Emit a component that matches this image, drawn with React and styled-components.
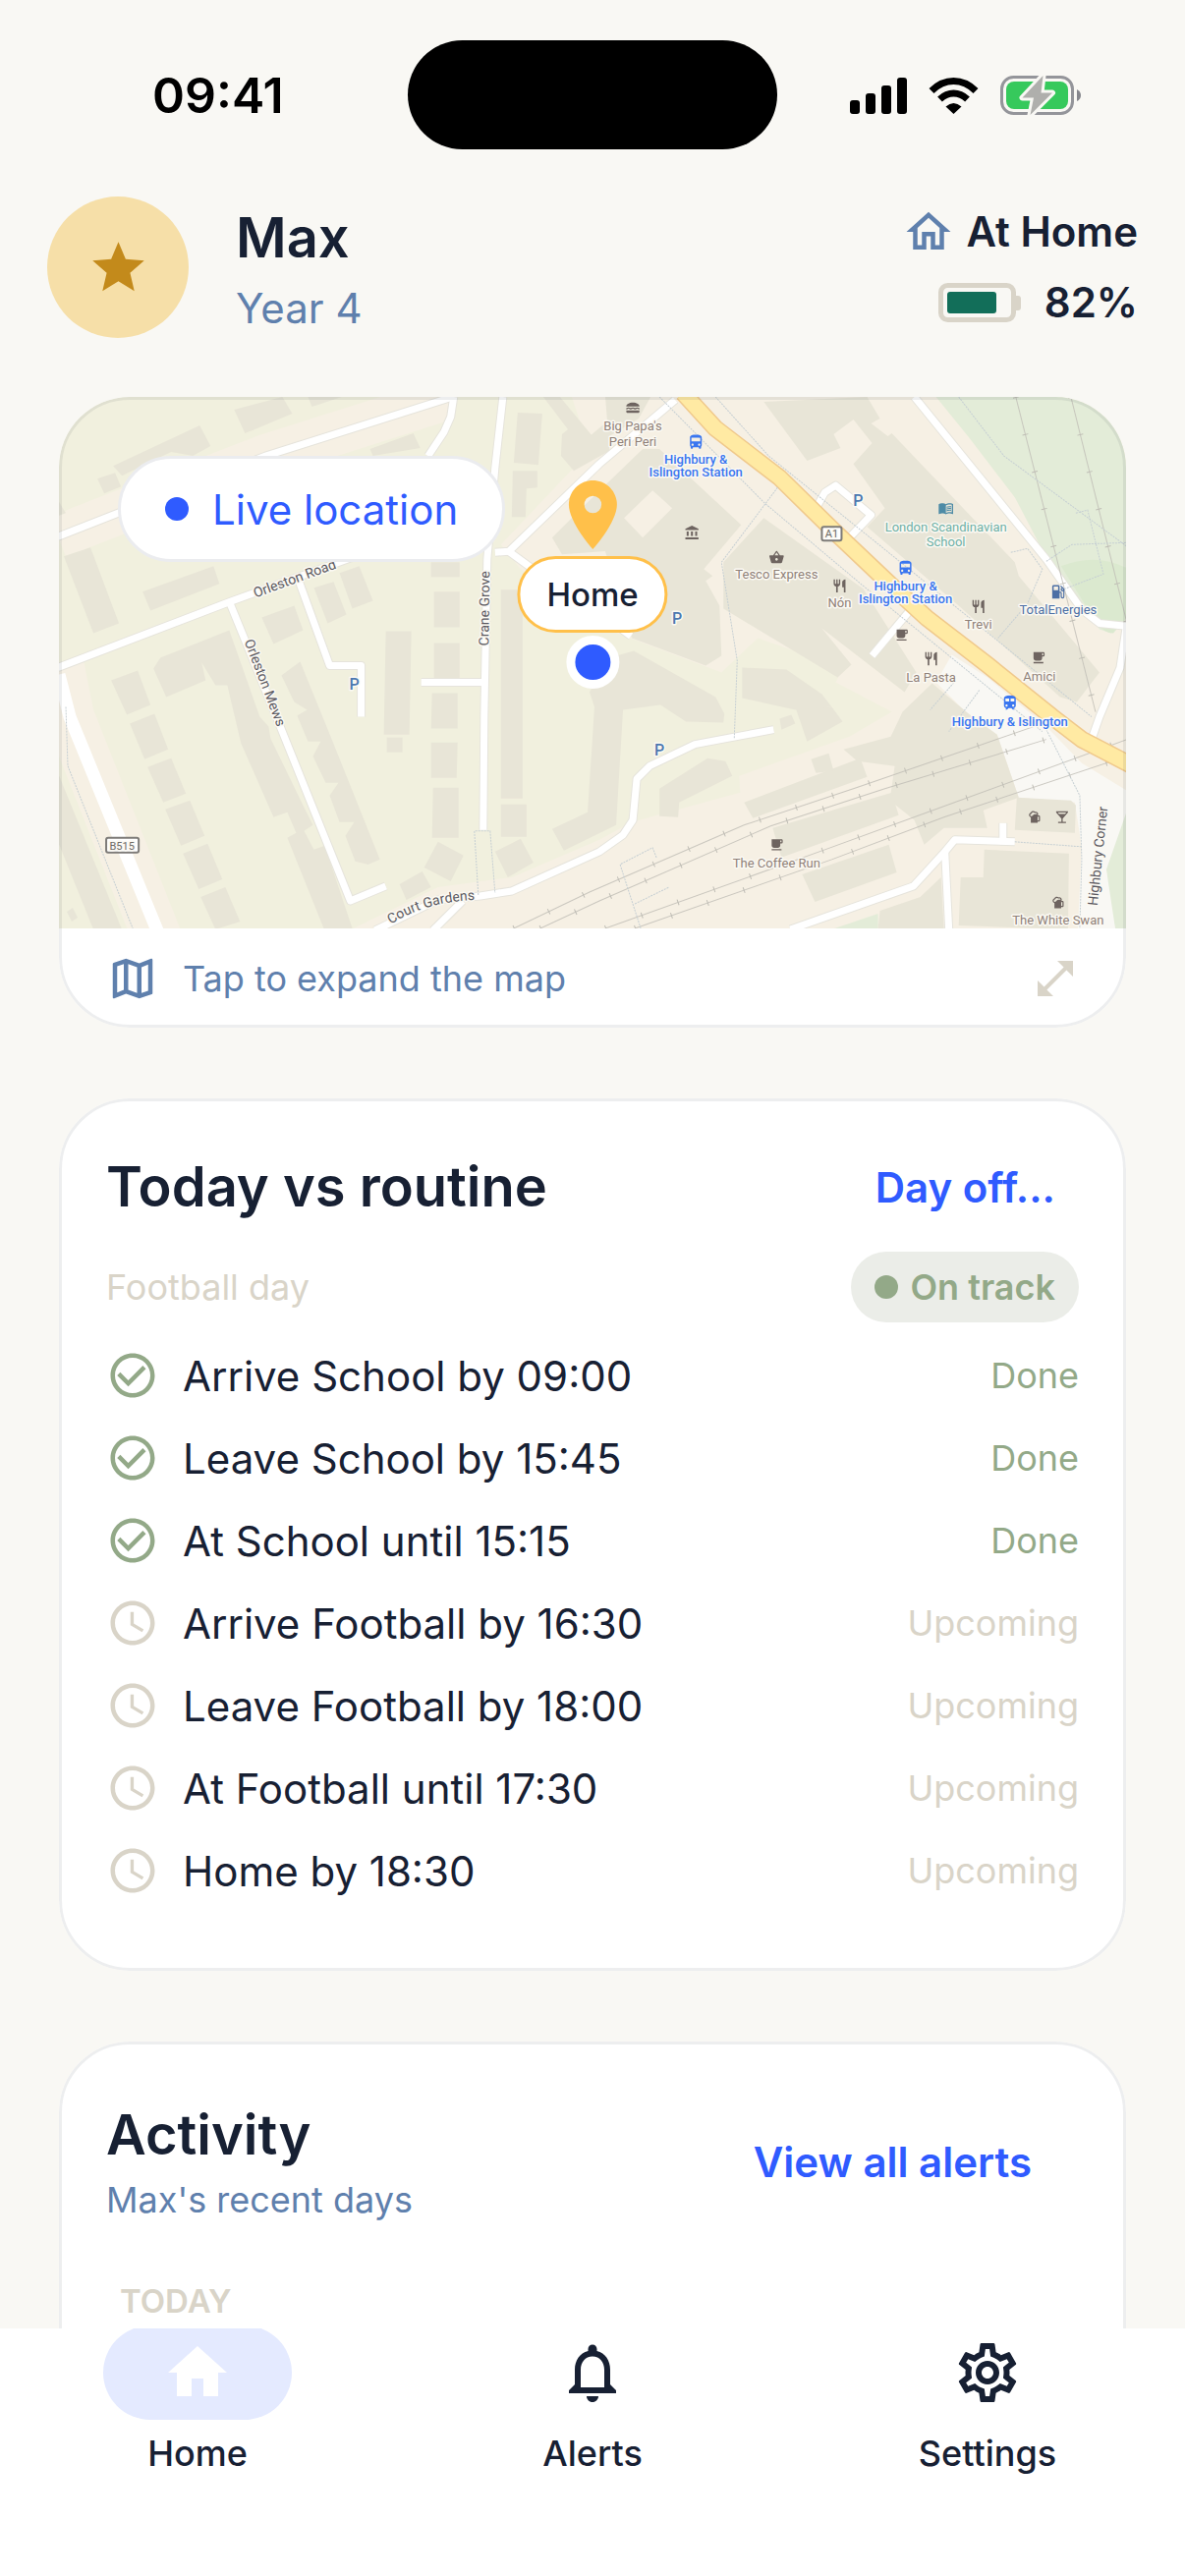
import React from 'react';
import styled, { createGlobalStyle } from 'styled-components';
import {
  MdAccountBalance,
  MdCheckCircleOutline,
  MdDirectionsBus,
  MdHome,
  MdLocalBar,
  MdLocalCafe,
  MdLocalGasStation,
  MdLocationOn,
  MdLunchDining,
  MdMenuBook,
  MdNotificationsNone,
  MdOpenInFull,
  MdOutlineHome,
  MdOutlineMap,
  MdOutlineSettings,
  MdRestaurant,
  MdSchedule,
  MdShoppingBasket,
  MdSportsBar,
  MdStar,
  MdTrain
} from 'react-icons/md';

const ink = '#172033';
const slate = '#5f80ad';
const sand = '#d9d4c8';
const sage = '#93a988';
const blue = '#2f5bff';
const amber = '#ffc04a';

const GlobalStyle = createGlobalStyle`
  * {
    box-sizing: border-box;
  }

  body {
    margin: 0;
    background: #f9f8f4;
    color: ${ink};
    font-family: Inter, Roboto, sans-serif;
  }

  h1, h2, p, ul {
    margin: 0;
    padding: 0;
  }

  button {
    border: 0;
    padding: 0;
    background: none;
    color: inherit;
    font: inherit;
    cursor: pointer;
  }

  svg {
    display: block;
    flex: none;
  }
`;

const Screen = styled.div`
  display: flex;
  flex-direction: column;
  height: 100vh;
`;

const StatusBar = styled.div`
  display: grid;
  grid-template-columns: 1fr auto 1fr;
  align-items: center;
  flex: none;
  padding-top: 41px;
`;

const Clock = styled.span`
  padding-left: 155px;
  color: #000;
  font-size: 50px;
  font-weight: 600;
`;

const Island = styled.div`
  width: 376px;
  height: 111px;
  border-radius: 56px;
  background: #000;
`;

const StatusIcons = styled.div`
  display: flex;
  align-items: center;
  justify-content: flex-end;
  gap: 22px;
  padding-right: 106px;
`;

const Header = styled.header`
  display: flex;
  align-items: center;
  flex: none;
  gap: 48px;
  padding: 48px 48px 60px;
`;

const Avatar = styled.div`
  display: flex;
  align-items: center;
  justify-content: center;
  width: 144px;
  height: 144px;
  border-radius: 50%;
  background: #f6dfa8;
  color: #c38a1b;
`;

const Name = styled.h1`
  font-size: 56px;
  font-weight: 600;
  line-height: 84px;
`;

const Year = styled.p`
  color: ${slate};
  font-size: 42px;
  line-height: 60px;
`;

const Presence = styled.div`
  display: flex;
  flex-direction: column;
  align-items: flex-end;
  gap: 18px;
  margin-left: auto;
`;

const PresenceLine = styled.div`
  display: flex;
  align-items: center;
  gap: ${({ $gap }) => $gap}px;
  font-size: 42px;
  font-weight: 600;
  line-height: 54px;

  svg {
    color: ${slate};
  }
`;

const Feed = styled.main`
  display: flex;
  flex-direction: column;
  flex: 1;
  min-height: 0;
  gap: 72px;
  padding: 0 60px;
  overflow: hidden;
`;

const Card = styled.section`
  position: relative;
  flex: none;
  border-radius: 72px;
  background: #fff;
  overflow: hidden;

  &::after {
    content: '';
    position: absolute;
    inset: 0;
    border: 3px solid rgba(23, 32, 51, 0.08);
    border-radius: inherit;
    pointer-events: none;
  }
`;

const PaddedCard = styled(Card)`
  padding: 48px 48px 60px;

  &:last-child {
    padding-bottom: 144px;
  }
`;

const MapArea = styled.div`
  position: relative;
  height: 541px;

  > svg {
    width: 100%;
    height: 100%;
  }
`;

const LiveChip = styled.div`
  position: absolute;
  top: 60px;
  left: 60px;
  display: flex;
  align-items: center;
  gap: 24px;
  height: 108px;
  padding: 0 45px;
  border: 3px solid #ebecef;
  border-radius: 54px;
  background: #fff;
  color: ${blue};
  font-size: 42px;
`;

const Dot = styled.span`
  width: 24px;
  height: 24px;
  border-radius: 50%;
  background: currentColor;
`;

const Marker = styled.div`
  position: absolute;
  top: 78px;
  left: 50%;
  display: flex;
  flex-direction: column;
  align-items: center;
  transform: translateX(-50%);

  svg {
    color: ${amber};
  }
`;

const MarkerLabel = styled.span`
  height: 78px;
  margin-bottom: 3px;
  padding: 0 27px;
  border: 3px solid ${amber};
  border-radius: 39px;
  background: #fff;
  font-size: 33px;
  font-weight: 500;
  line-height: 72px;
`;

const MarkerDot = styled.span`
  width: 54px;
  height: 54px;
  border: 9px solid #fff;
  border-radius: 50%;
  background: ${blue};
`;

const ExpandButton = styled.button`
  display: flex;
  align-items: center;
  gap: 24px;
  width: 100%;
  height: 101px;
  padding: 0 48px;
  color: ${slate};
  font-size: 36px;

  svg:last-child {
    margin-left: auto;
    color: ${sand};
  }
`;

const CardHead = styled.div`
  display: flex;
  align-items: center;
  justify-content: space-between;
  min-height: ${({ $height }) => $height}px;
`;

const Title = styled.h2`
  font-size: 56px;
  font-weight: 600;
  line-height: 78px;
`;

const Subtitle = styled.p`
  color: ${slate};
  font-size: 36px;
  line-height: 54px;
`;

const TextButton = styled.button`
  align-self: stretch;
  padding: 0 ${({ $inset }) => $inset}px;
  color: ${blue};
  font-size: 42px;
  font-weight: 600;
`;

const DayRow = styled.div`
  display: flex;
  align-items: center;
  justify-content: space-between;
  margin: 24px 0 12px;
  color: ${sand};
  font-size: 36px;
`;

const TrackBadge = styled.span`
  display: flex;
  align-items: center;
  gap: 12px;
  height: 72px;
  padding: 0 24px;
  border-radius: 36px;
  background: #ebede8;
  color: ${sage};
  font-weight: 600;
`;

const Step = styled.li`
  display: flex;
  align-items: center;
  gap: 24px;
  height: 84px;
  font-size: 42px;

  svg {
    color: ${({ $done }) => ($done ? sage : sand)};
  }
`;

const StepState = styled.span`
  margin-left: auto;
  color: ${({ $done }) => ($done ? sage : sand)};
  font-size: 36px;
`;

const DayLabel = styled.p`
  margin: 44px 0 0 14px;
  color: ${sand};
  font-size: 33px;
  font-weight: 600;
  line-height: 48px;
`;

const TabBar = styled.nav`
  display: grid;
  grid-template-columns: repeat(3, 1fr);
  flex: none;
  padding-bottom: 101px;
  background: #fff;
  overflow: hidden;
`;

const Tab = styled.button`
  display: flex;
  flex-direction: column;
  align-items: center;
  gap: 10px;
  margin-top: -3px;
  font-size: 36px;
  font-weight: 500;
  line-height: 48px;
`;

const TabIcon = styled.span`
  display: flex;
  align-items: center;
  justify-content: center;
  width: 192px;
  height: 96px;
  border-radius: 48px;
  background: ${({ $active }) => ($active ? '#e4eaff' : 'transparent')};
  color: ${({ $active }) => ($active ? '#fff' : ink)};
`;

const steps = [
  { text: 'Arrive School by 09:00', done: true },
  { text: 'Leave School by 15:45', done: true },
  { text: 'At School until 15:15', done: true },
  { text: 'Arrive Football by 16:30', done: false },
  { text: 'Leave Football by 18:00', done: false },
  { text: 'At Football until 17:30', done: false },
  { text: 'Home by 18:30', done: false }
];

const tabs = [
  { label: 'Home', Icon: MdHome, active: true },
  { label: 'Alerts', Icon: MdNotificationsNone },
  { label: 'Settings', Icon: MdOutlineSettings }
];

const buildings = [
  '56,70 144,29 155,50 137,60 115,56 65,80',
  '40,83 58,77 64,91 47,98',
  '0,105 8,118 0,121',
  '179,13 228,0 238,17 190,37',
  '254,0 288,0 258,10',
  '317,53 361,37 368,52 320,60',
  '467,16 492,17 488,69 463,67',
  '462,75 487,75 487,92 476,93 475,122 461,122',
  '493,0 510,0 543,40 560,32 560,55 524,75 511,60 512,38 518,33',
  '502,143 540,105 560,110 580,155 512,160',
  '6,162 33,153 62,230 36,240',
  '86,198 158,172 164,190 94,217',
  '260,194 280,188 293,221 274,230',
  '286,179 306,172 320,207 299,215',
  '207,224 240,212 249,237 219,251',
  '379,168 408,168 408,183 379,183',
  '382,198 408,198 408,234 382,234',
  '382,250 408,250 408,287 382,287',
  '380,301 406,301 406,337 379,337',
  '333,238 359,238 357,343 331,343',
  '334,346 350,346 350,361 334,361',
  '379,351 406,351 405,387 379,387',
  '381,397 407,397 407,448 380,448',
  '450,196 472,196 472,408 450,408',
  '450,414 476,414 476,447 450,447',
  '386,452 412,466 399,492 372,478',
  '444,462 470,449 483,473 457,488',
  '347,495 370,482 379,498 354,511',
  '502,439 538,422 545,315 540,300 560,265 585,258 668,305 677,322 676,331 638,330 612,313 574,318 567,435 514,461',
  '104,265 174,237 205,325 214,335 216,347 249,415 259,435 250,441 260,460 271,456 299,540 270,540 233,448 242,443 233,422 219,427 186,352 172,293 160,293 146,270 150,288 110,305 97,276',
  '227,283 246,269 275,340 327,470 315,475 302,472 292,446 301,432 286,432 276,405 285,392 272,392 259,365 267,350 254,350 243,324 253,318 240,310',
  '54,288 81,278 94,313 70,323',
  '73,332 98,322 112,358 88,368',
  '91,376 115,367 130,403 107,412',
  '109,419 134,410 149,446 125,456',
  '127,464 152,454 167,490 143,500',
  '145,508 170,498 185,533 160,541',
  '0,382 65,541 36,541 0,452',
  '9,523 15,519 20,529 14,533',
  '540,40 558,25 556,0 602,0 590,22 560,40',
  '540,105 594,53 611,53 694,130 656,175 665,182 658,187 672,212 674,263 658,273 583,245 560,170',
  '676,168 717,123 818,195 872,280 860,300 776,235 806,272 792,285 676,215',
  '717,5 822,0 835,22 826,27 843,40 847,37 972,168 976,182 1058,280 1035,310 1018,305 915,212 822,132 840,113 808,68 827,47 808,23 788,38 795,52 761,65',
  '888,291 925,322 954,343 976,407 940,420 944,438 900,438 880,455 870,430 845,410 850,375 812,370 798,358 846,345 858,320',
  '697,412 815,367 822,386 706,428',
  '726,438 847,402 854,425 735,468',
  '756,485 844,455 852,483 769,513',
  '765,368 783,362 788,380 770,382',
  '611,398 660,367 678,370 685,385 631,412 630,427 611,426',
  '749,315 786,315 797,330 761,350',
  '695,275 740,277 776,302 786,315 749,318 695,306',
  '733,327 745,323 749,332 735,338',
  '833,541 835,522 876,508 897,488 900,541',
  '915,537 917,488 940,488 941,460 1027,464 1026,541',
  '974,407 1029,410 1034,415 1033,443 972,440'
];

const verges = ['0,142 61,118 211,60 397,1', '1,270 12,325 105,560'];

const streets = [
  '0,142 61,118 211,60 401,0',
  '402,0 399,20 392,36 376,60',
  '452,0 444,72 436,165 433,325 432,440',
  '444,158 458,157 550,68 627,3',
  '458,157 480,173 530,205 582,243',
  '0,275 175,208 280,170 444,110',
  '174,208 219,318 297,512 333,497',
  '244,185 276,273 308,273 308,325',
  '369,290 433,290',
  '322,542 386,511 429,507 461,502 550,462 574,445 584,430 588,388 601,375 647,353 727,338',
  '411,512 381,542',
  '870,0 1004,165 1040,216 1058,230 1086,233',
  '1085,235 1079,275 1058,325 1051,345',
  '769,115 779,97 790,90 826,120 804,143',
  '867,215 827,263',
  '744,541 869,497 901,462 911,450 972,452',
  '960,433 960,450',
  '901,462 905,541'
];

const rails = [
  '463,540 540,503 697,435 811,397 933,355 1020,325',
  '490,540 550,512 724,436 840,398 1004,348',
  '556,540 779,460 897,417 1086,348',
  '586,540 786,470 900,427 1086,365',
  '973,0 1054,320',
  '1029,0 1086,230'
];

const paths = [
  '668,0 722,60 840,155 1050,325',
  '611,0 718,108 818,192 1000,340',
  '731,92 674,168 690,268 687,347',
  '8,315 10,375 76,540',
  '427,506 423,441 439,441 444,504',
  '608,468 604,458 571,475 592,540',
  '586,515 621,498',
  '915,0 961,60 1086,152',
  '972,452 1040,457',
  '1004,338 1038,405 1040,470 1038,540',
  '968,158 985,154 1000,175 985,210 955,245',
  '1004,167 1030,150 1086,148',
  '1034,118 1046,115 1062,180 1020,196',
  '912,288 886,318',
  '936,298 905,340'
];

const restaurants = [[794, 192], [935, 213], [887, 266]];
const cafes = [[857, 242], [996, 265], [730, 455]];
const bars = [[992, 427], [1016, 514]];
const parkings = [[813, 111], [629, 231], [301, 297], [611, 364]];

const venues = [
  { x: 584, y: 34, lines: ["Big Papa's", 'Peri Peri'], step: 16 },
  { x: 730, y: 185, lines: ['Tesco Express'] },
  { x: 794, y: 214, lines: ['Nón'] },
  { x: 935, y: 236, lines: ['Trevi'] },
  { x: 887, y: 289, lines: ['La Pasta'] },
  { x: 997, y: 288, lines: ['Amici'] },
  { x: 730, y: 478, lines: ['The Coffee Run'] },
  { x: 1016, y: 536, lines: ['The White Swan'] },
  { x: 902, y: 137, lines: ['London Scandinavian', 'School'], step: 15, color: '#6db0a6' },
  { x: 1016, y: 221, lines: ['TotalEnergies'], color: '#4c6fa5' },
  { x: 648, y: 68, lines: ['Highbury &', 'Islington Station'], step: 13, color: '#3a76f0', bold: true },
  { x: 861, y: 197, lines: ['Highbury &', 'Islington Station'], step: 13, color: '#3a76f0', bold: true },
  { x: 967, y: 334, lines: ['Highbury & Islington'], color: '#3a76f0', bold: true }
];

const MapText = styled.text`
  fill: ${({ $color }) => $color || '#8f8078'};
  stroke: #fbf9f3;
  stroke-width: 3px;
  stroke-linejoin: round;
  paint-order: stroke;
  font-family: Roboto, sans-serif;
  font-size: ${({ $size }) => $size || 13}px;
  font-weight: ${({ $bold }) => ($bold ? 500 : 400)};
  text-anchor: middle;
`;

const Poi = ({ icon: Icon, x, y, color = '#6e6460', size = 16 }) => (
  <Icon x={x - size / 2} y={y - size / 2} size={size} color={color} />
);

const StreetMap = () => (
  <svg viewBox="0 0 1086 540" preserveAspectRatio="xMidYMid slice" role="img" aria-label="Street map">
    <rect width="1086" height="540" fill="#f1f0de" />
    <g fill="none" stroke="#f6f0e4">
      <polyline points={verges[0]} strokeWidth="44" />
      <polyline points={verges[1]} strokeWidth="50" />
    </g>
    <polygon
      fill="#f6f0e4"
      points="522,0 1086,0 1086,540 300,540 386,498 461,488 550,450 583,432 693,402 692,385 804,345 847,320 790,290 797,275 711,245 674,280 568,240 470,175 450,150 540,55"
    />
    <g fill="#e3ecd8">
      <polygon points="892,0 1086,0 1086,225 1070,240 1058,236 1040,212 1019,192 972,102 926,42" />
      <polygon points="1086,420 1070,450 1065,480 1067,510 1074,540 1086,540" />
      <polygon points="786,541 833,525 833,541" />
    </g>
    <path d="M1019 172q35-14 67 2v50l-14 16q-10 0-18-12z" fill="#dbe9cf" />
    <polygon
      fill="#f9f8f4"
      points="908,262 892,290 920,318 954,343 976,407 1033,412 1040,458 1036,540 1074,540 1065,480 1086,420 1086,400 1040,372 1004,335 944,285"
    />
    <g fill="#e8e5d7">
      {buildings.map(points => <polygon key={points} points={points} />)}
    </g>
    <polygon points="575,123 604,95 624,113 594,143" fill="#f6f0e4" />
    <g fill="none" stroke="#e6e4dc" strokeWidth="9" strokeLinejoin="round">
      {streets.map(points => <polyline key={points} points={points} />)}
    </g>
    <g fill="none" stroke="#fff" strokeWidth="7" strokeLinejoin="round">
      {streets.map(points => <polyline key={points} points={points} />)}
      <polyline points="1,282 12,325 102,545" strokeWidth="13" />
    </g>
    <g fill="none" stroke="#bfbdb5">
      {rails.map(points => (
        <g key={points}>
          <polyline points={points} opacity="0.8" />
          <polyline points={points} strokeWidth="6" strokeDasharray="1 38" />
        </g>
      ))}
    </g>
    <g fill="none" strokeLinejoin="round">
      <polyline
        points="635,-4 668,32 733,82 790,138 847,192 883,225 944,272 1010,325 1040,348 1090,374"
        stroke="#f0c98c"
        strokeWidth="18"
      />
      <polyline
        points="635,-4 668,32 733,82 790,138 847,192 883,225 944,272 1010,325 1040,348 1090,374"
        stroke="#ffeaa3"
        strokeWidth="15"
      />
    </g>
    <g fill="none" stroke="#c6cfd3" strokeDasharray="2 1">
      {paths.map(points => <polyline key={points} points={points} />)}
    </g>

    <g fill="#fff" stroke="#7d7b78" strokeWidth="2">
      <rect x="49" y="448" width="33" height="15" rx="2" />
      <rect x="776" y="132" width="20" height="14" rx="2" />
    </g>
    <MapText x="65" y="460" $size={11} $color="#6d6b68">B515</MapText>
    <MapText x="786" y="143" $size={11} $color="#6d6b68">A1</MapText>

    <MapText $size={14} $color="#5a5860" transform="translate(242 189) rotate(-20)">Orleston Road</MapText>
    <MapText $size={14} $color="#5a5860" transform="translate(206 292) rotate(69)">Orleston Mews</MapText>
    <MapText $size={14} $color="#5a5860" transform="translate(438 215) rotate(-89)">Crane Grove</MapText>
    <MapText $size={14} $color="#5a5860" transform="translate(1061 467) rotate(-84)">Highbury Corner</MapText>
    <path id="court-gardens" d="M338 536Q372 513 424 511" fill="none" />
    <MapText $size={14} $color="#5a5860">
      <textPath href="#court-gardens" startOffset="50%">Court Gardens</textPath>
    </MapText>

    {restaurants.map(([x, y]) => <Poi key={x} icon={MdRestaurant} x={x} y={y} />)}
    {cafes.map(([x, y]) => <Poi key={x} icon={MdLocalCafe} x={x} y={y} size={15} />)}
    {bars.map(([x, y]) => <Poi key={x} icon={MdSportsBar} x={x} y={y} size={15} />)}
    <Poi icon={MdLocalBar} x={1020} y={427} />
    <Poi icon={MdLunchDining} x={584} y={11} />
    <Poi icon={MdAccountBalance} x={644} y={138} />
    <Poi icon={MdShoppingBasket} x={730} y={163} />
    <Poi icon={MdMenuBook} x={902} y={113} color="#4d8ba6" />
    <Poi icon={MdLocalGasStation} x={1016} y={198} color="#4c6fa5" size={18} />
    <Poi icon={MdDirectionsBus} x={648} y={46} color="#3a76f0" size={18} />
    <Poi icon={MdDirectionsBus} x={861} y={174} color="#3a76f0" size={18} />
    <Poi icon={MdTrain} x={967} y={311} color="#3a76f0" size={18} />
    {parkings.map(([x, y]) => (
      <MapText key={x} x={x} y={y} $size={16} $color="#4c78b0" $bold>P</MapText>
    ))}
    {venues.map(({ x, y, lines, step, color, bold }) => (
      <MapText key={`${x}-${y}`} $color={color} $bold={bold}>
        {lines.map((line, i) => (
          <tspan key={line} x={x} y={y + i * (step || 0)}>{line}</tspan>
        ))}
      </MapText>
    ))}
  </svg>
);

const SignalIcon = () => (
  <svg width="58" height="38" viewBox="0 0 58 38" fill="#000">
    <rect y="24" width="10" height="14" rx="3" />
    <rect x="16" y="17" width="10" height="21" rx="3" />
    <rect x="32" y="9" width="10" height="29" rx="3" />
    <rect x="48" y="1" width="10" height="37" rx="3" />
  </svg>
);

const WifiIcon = () => (
  <svg width="51" height="38" viewBox="0 0 51 38">
    <g fill="none" stroke="#000" strokeWidth="7">
      <path d="M3 14.5Q13 4.500 25.5 4.500T48 14.5" />
      <path d="M11.5 23Q18 17 25.5 17T39.5 23" />
    </g>
    <path d="M17.5 30.5Q25.5 23.5 33.5 30.5L25.5 38z" fill="#000" />
  </svg>
);

const ChargingIcon = () => (
  <svg width="82" height="40" viewBox="0 0 82 40">
    <rect x="1.5" y="1.5" width="72" height="37" rx="12" fill="none" stroke="#94959a" strokeWidth="3" />
    <rect x="6" y="6" width="63" height="28" rx="8" fill="#36c95c" />
    <path d="M78 14q4 2 4 6t-4 6z" fill="#85868c" />
    <path
      d="M43.5 0L22.5 22.5H34L30.5 40 53 17.5H41.5z"
      fill="#afafac"
      stroke="#f9f8f4"
      strokeWidth="6"
      strokeLinejoin="round"
      paintOrder="stroke"
    />
  </svg>
);

const BatteryIcon = () => (
  <svg width="84" height="40" viewBox="0 0 84 40">
    <rect x="2.5" y="2.5" width="74" height="35" rx="7" fill="none" stroke={sand} strokeWidth="5" />
    <rect x="9" y="9" width="50" height="22" rx="3" fill="#126e59" />
    <path d="M77 13h4q3 0 3 3v9q0 3-3 3h-4z" fill={sand} />
  </svg>
);

const App = () => (
  <Screen>
    <GlobalStyle />
    <StatusBar>
      <Clock>09:41</Clock>
      <Island />
      <StatusIcons>
        <SignalIcon />
        <WifiIcon />
        <ChargingIcon />
      </StatusIcons>
    </StatusBar>

    <Header>
      <Avatar>
        <MdStar size={63} />
      </Avatar>
      <div>
        <Name>Max</Name>
        <Year>Year 4</Year>
      </div>
      <Presence>
        <PresenceLine $gap={12}>
          <MdOutlineHome size={54} />
          At Home
        </PresenceLine>
        <PresenceLine $gap={24}>
          <BatteryIcon />
          82%
        </PresenceLine>
      </Presence>
    </Header>

    <Feed>
      <Card>
        <MapArea>
          <StreetMap />
          <LiveChip>
            <Dot />
            Live location
          </LiveChip>
          <Marker>
            <MdLocationOn size={84} />
            <MarkerLabel>Home</MarkerLabel>
            <MarkerDot />
          </Marker>
        </MapArea>
        <ExpandButton type="button">
          <MdOutlineMap size={54} />
          Tap to expand the map
          <MdOpenInFull size={48} />
        </ExpandButton>
      </Card>

      <PaddedCard>
        <CardHead $height={84}>
          <Title>Today vs routine</Title>
          <TextButton type="button" $inset={24}>Day off...</TextButton>
        </CardHead>
        <DayRow>
          <span>Football day</span>
          <TrackBadge>
            <Dot />
            On track
          </TrackBadge>
        </DayRow>
        <ul>
          {steps.map(({ text, done }) => (
            <Step key={text} $done={done}>
              {done ? <MdCheckCircleOutline size={54} /> : <MdSchedule size={54} />}
              {text}
              <StepState $done={done}>{done ? 'Done' : 'Upcoming'}</StepState>
            </Step>
          ))}
        </ul>
      </PaddedCard>

      <PaddedCard>
        <CardHead $height={148}>
          <div>
            <Title>Activity</Title>
            <Subtitle>Max's recent days</Subtitle>
          </div>
          <TextButton type="button" $inset={48}>View all alerts</TextButton>
        </CardHead>
        <DayLabel>TODAY</DayLabel>
      </PaddedCard>
    </Feed>

    <TabBar>
      {tabs.map(({ label, Icon, active }) => (
        <Tab key={label} type="button" aria-current={active ? 'page' : undefined}>
          <TabIcon $active={active}>
            <Icon size={72} />
          </TabIcon>
          {label}
        </Tab>
      ))}
    </TabBar>
  </Screen>
);

export default App;
